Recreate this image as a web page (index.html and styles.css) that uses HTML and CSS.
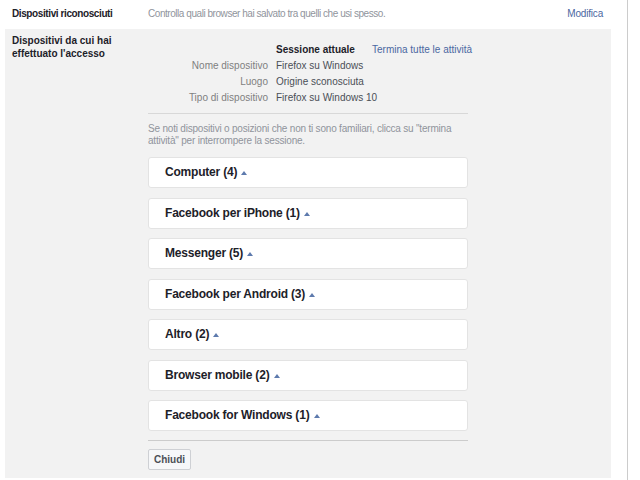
FILE: index.html
```html
<!DOCTYPE html>
<html>
  <head>
    <meta name="viewport" content="width=device-width, initial-scale=1" />
    <link rel="stylesheet" href="styles.css">
  </head>
  <body>
    <div class="page">
      <div class="settings">
        <div class="row">
          <div class="row-label tight">Dispositivi riconosciuti</div>
          <div class="row-desc">Controlla quali browser hai salvato tra quelli che usi spesso.</div>
          <a class="row-edit" href="#">Modifica</a>
        </div>

        <div class="row open">
          <div class="row-label">Dispositivi da cui hai effettuato l'accesso</div>
          <div class="row-body">
            <table class="session">
              <tr>
                <td class="key"></td>
                <td class="val bold">Sessione attuale</td>
                <td class="end"><a href="#">Termina tutte le attività</a></td>
              </tr>
              <tr>
                <td class="key">Nome dispositivo</td>
                <td class="val">Firefox su Windows</td>
                <td></td>
              </tr>
              <tr>
                <td class="key">Luogo</td>
                <td class="val">Origine sconosciuta</td>
                <td></td>
              </tr>
              <tr>
                <td class="key">Tipo di dispositivo</td>
                <td class="val">Firefox su Windows 10</td>
                <td></td>
              </tr>
            </table>
            <hr />
            <p class="notice">Se noti dispositivi o posizioni che non ti sono familiari, clicca su "termina attività" per interrompere la sessione.</p>

            <div class="groups">
              <div class="group">Computer (4) <span class="caret"></span></div>
              <div class="group">Facebook per iPhone (1) <span class="caret"></span></div>
              <div class="group">Messenger (5) <span class="caret"></span></div>
              <div class="group">Facebook per Android (3) <span class="caret"></span></div>
              <div class="group">Altro (2) <span class="caret"></span></div>
              <div class="group">Browser mobile (2) <span class="caret"></span></div>
              <div class="group">Facebook for Windows (1) <span class="caret"></span></div>
            </div>
            <hr class="bottom" />
            <button class="closebtn" type="button">Chiudi</button>
          </div>
        </div>
      </div>
    </div>
  </body>
</html>
```

FILE: styles.css
```css
body {
  margin: 0;
  font-family: "Liberation Sans", Arial, Helvetica, sans-serif;
  font-size: 10px;
  color: #1d2129;
  background-color: white;
}

* {
  box-sizing: border-box;
}

a {
  color: #4b67a1;
  text-decoration: none;
}

/* Page with the right hand rule */
.page {
  width: 628px;
  height: 480px;
  border-right: 1px solid #cccccc;
  padding-left: 5px;
}

.settings {
  width: 606px;
}

/* One settings row */
.row {
  display: flex;
  padding: 8px 7px 0 7px;
  height: 29px;
}

.row-label {
  width: 136px;
  font-weight: bold;
  color: #1d2129;
  line-height: 13px;
}

.row-label.tight {
  letter-spacing: -0.4px;
  line-height: 12px;
}

.row-desc {
  flex: 1;
  color: #90949c;
  line-height: 12px;
  letter-spacing: -0.45px;
}

.row-edit {
  line-height: 12px;
  letter-spacing: -0.2px;
  padding-right: 1px;
}

/* Expanded row */
.row.open {
  background-color: #f2f2f2;
  height: 449px;
  padding-top: 5px;
}

.row.open .row-label {
  padding-right: 24px;
}

.row-body {
  width: 320px;
}

.session {
  table-layout: fixed;
  width: 324px;
  border-collapse: collapse;
  margin-top: 8px;
  white-space: nowrap;
}

.session td {
  padding: 0;
  height: 16px;
  line-height: 16px;
  vertical-align: top;
}

.session .key {
  width: 120px;
  text-align: right;
  color: #7f7f7f;
}

.session .val {
  width: 104px;
  padding-left: 8px;
  color: #4b4f56;
}

.session .bold {
  font-weight: bold;
  color: #1d2129;
}

.session .end {
  width: 100px;
}

.session .end a {
  color: #4b67a1;
}

hr {
  border: none;
  border-top: 1px solid #d8d8d8;
  margin: 7px 0 0 0;
}

.notice {
  margin: 9px 0 10px 0;
  color: #90949c;
  line-height: 12px;
  letter-spacing: -0.2px;
}

.groups {
  display: flex;
  flex-direction: column;
  gap: 9.5px;
}

.group {
  height: 31px;
  background-color: white;
  border: 1px solid #e3e3e3;
  border-radius: 3px;
  padding: 0 16px;
  font-size: 12px;
  letter-spacing: -0.2px;
  font-weight: bold;
  color: #1d2129;
  line-height: 29px;
}

.caret {
  display: inline-block;
  width: 0;
  height: 0;
  border-left: 3.5px solid transparent;
  border-right: 3.5px solid transparent;
  border-bottom: 4px solid #5d7aad;
  vertical-align: 1px;
  margin-left: 1px;
}

hr.bottom {
  margin-top: 9px;
  border-top: 1px solid #cccccc;
}

.closebtn {
  display: block;
  margin-top: 8px;
  height: 21px;
  padding: 0 5px;
  font-family: "Liberation Sans", Arial, sans-serif;
  font-size: 10px;
  font-weight: bold;
  color: #4b4f56;
  background-color: #f6f7f9;
  border: 1px solid #ced0d4;
  border-radius: 2px;
}
```
